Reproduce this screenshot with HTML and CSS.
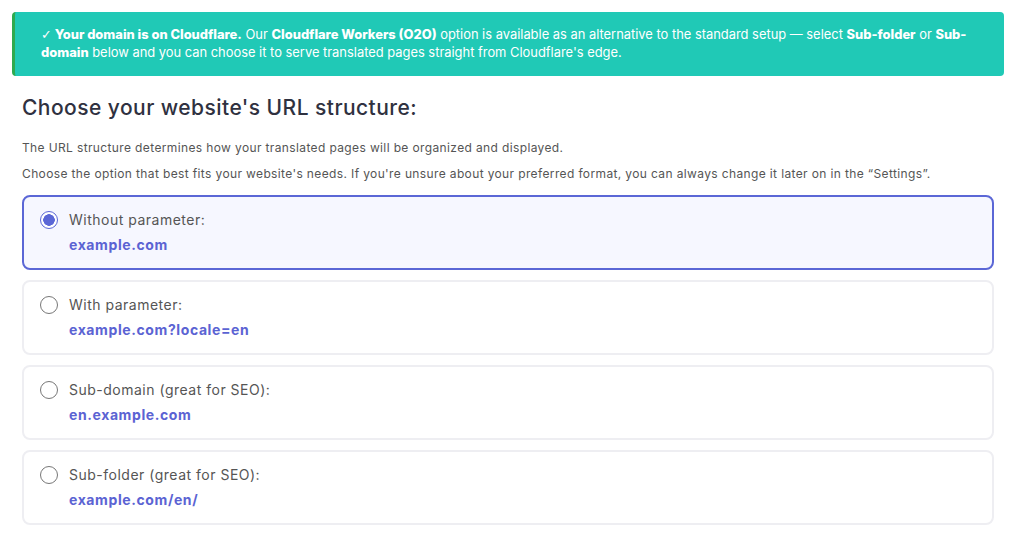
FILE: index.html
```html
<!DOCTYPE html>
<html>
<head>
    <title>URL structure</title>
    <link rel="stylesheet" href="styles.css">
</head>
<body>
    <div class="notice">
        <b><span class="check">&#10003;</span> Your domain is on Cloudflare.</b> Our <b>Cloudflare Workers (O2O)</b> option is available as an alternative to the standard setup &mdash; select <b>Sub-folder</b> or <b>Sub-domain</b> below and you can choose it to serve translated pages straight from Cloudflare's edge.
    </div>

    <div class="section">
        <h2 class="title">Choose your website's URL structure:</h2>
        <p class="desc">The URL structure determines how your translated pages will be organized and displayed.</p>
        <p class="desc">Choose the option that best fits your website's needs. If you're unsure about your preferred format, you can always change it later on in the &ldquo;Settings&rdquo;.</p>

        <div class="options">
            <label class="option selected">
                <span class="radio"></span>
                <span class="option-text">
                    <span class="option-name">Without parameter:</span>
                    <span class="option-url">example.com</span>
                </span>
            </label>
            <label class="option">
                <span class="radio"></span>
                <span class="option-text">
                    <span class="option-name">With parameter:</span>
                    <span class="option-url">example.com?locale=en</span>
                </span>
            </label>
            <label class="option">
                <span class="radio"></span>
                <span class="option-text">
                    <span class="option-name">Sub-domain (great for SEO):</span>
                    <span class="option-url">en.example.com</span>
                </span>
            </label>
            <label class="option">
                <span class="radio"></span>
                <span class="option-text">
                    <span class="option-name">Sub-folder (great for SEO):</span>
                    <span class="option-url">example.com/en/</span>
                </span>
            </label>
        </div>
    </div>
</body>
</html>
```

FILE: styles.css
```css
/* General */
body {
    font-family: Inter, "Noto Sans", sans-serif;
    margin: 0;
    padding: 12px 20px 0 12px;
    background: #ffffff;
    color: #555;
}

/* Cloudflare notice */
.notice {
    background: #20c9b6;
    border-left: 3px solid #2eaa4f;
    border-radius: 4px;
    color: #ffffff;
    font-size: 12.9px;
    line-height: 18px;
    padding: 14px 24px 14px 26px;
}

.notice b {
    font-weight: 800;
}

.check {
    font-family: "DejaVu Sans", sans-serif;
    font-weight: 700;
}

/* Section */
.section {
    padding: 0 10px;
}

.title {
    font-size: 21px;
    font-weight: 500;
    letter-spacing: 0.45px;
    color: #2f3140;
    margin: 19px 0 19px;
}

.desc {
    font-size: 12px;
    letter-spacing: 0.37px;
    color: #555;
    margin: 0 0 8px;
    line-height: 18px;
}

/* Options */
.options {
    display: flex;
    flex-direction: column;
    gap: 10px;
    margin-top: 12px;
}

.option {
    display: flex;
    align-items: flex-start;
    gap: 11px;
    border: 2px solid #eeeef2;
    border-radius: 8px;
    padding: 13px 16px 13px 16px;
    background: #ffffff;
    cursor: pointer;
}

.option.selected {
    border-color: #5b67d6;
    background: #f6f7ff;
}

.radio {
    width: 18px;
    height: 18px;
    border: 1.5px solid #777;
    border-radius: 50%;
    box-sizing: border-box;
    margin-top: 1px;
    flex-shrink: 0;
    background: #fff;
}

.option.selected .radio {
    border-color: #5b67d6;
    background: radial-gradient(circle, #5b67d6 0 5.5px, #fff 6px);
}

.option-text {
    display: flex;
    flex-direction: column;
    gap: 5px;
}

.option-name {
    font-size: 14px;
    letter-spacing: 0.5px;
    color: #555;
    line-height: 20px;
}

.option-url {
    font-size: 14px;
    font-weight: 700;
    letter-spacing: 0.6px;
    color: #5b63d3;
    line-height: 20px;
}
```
